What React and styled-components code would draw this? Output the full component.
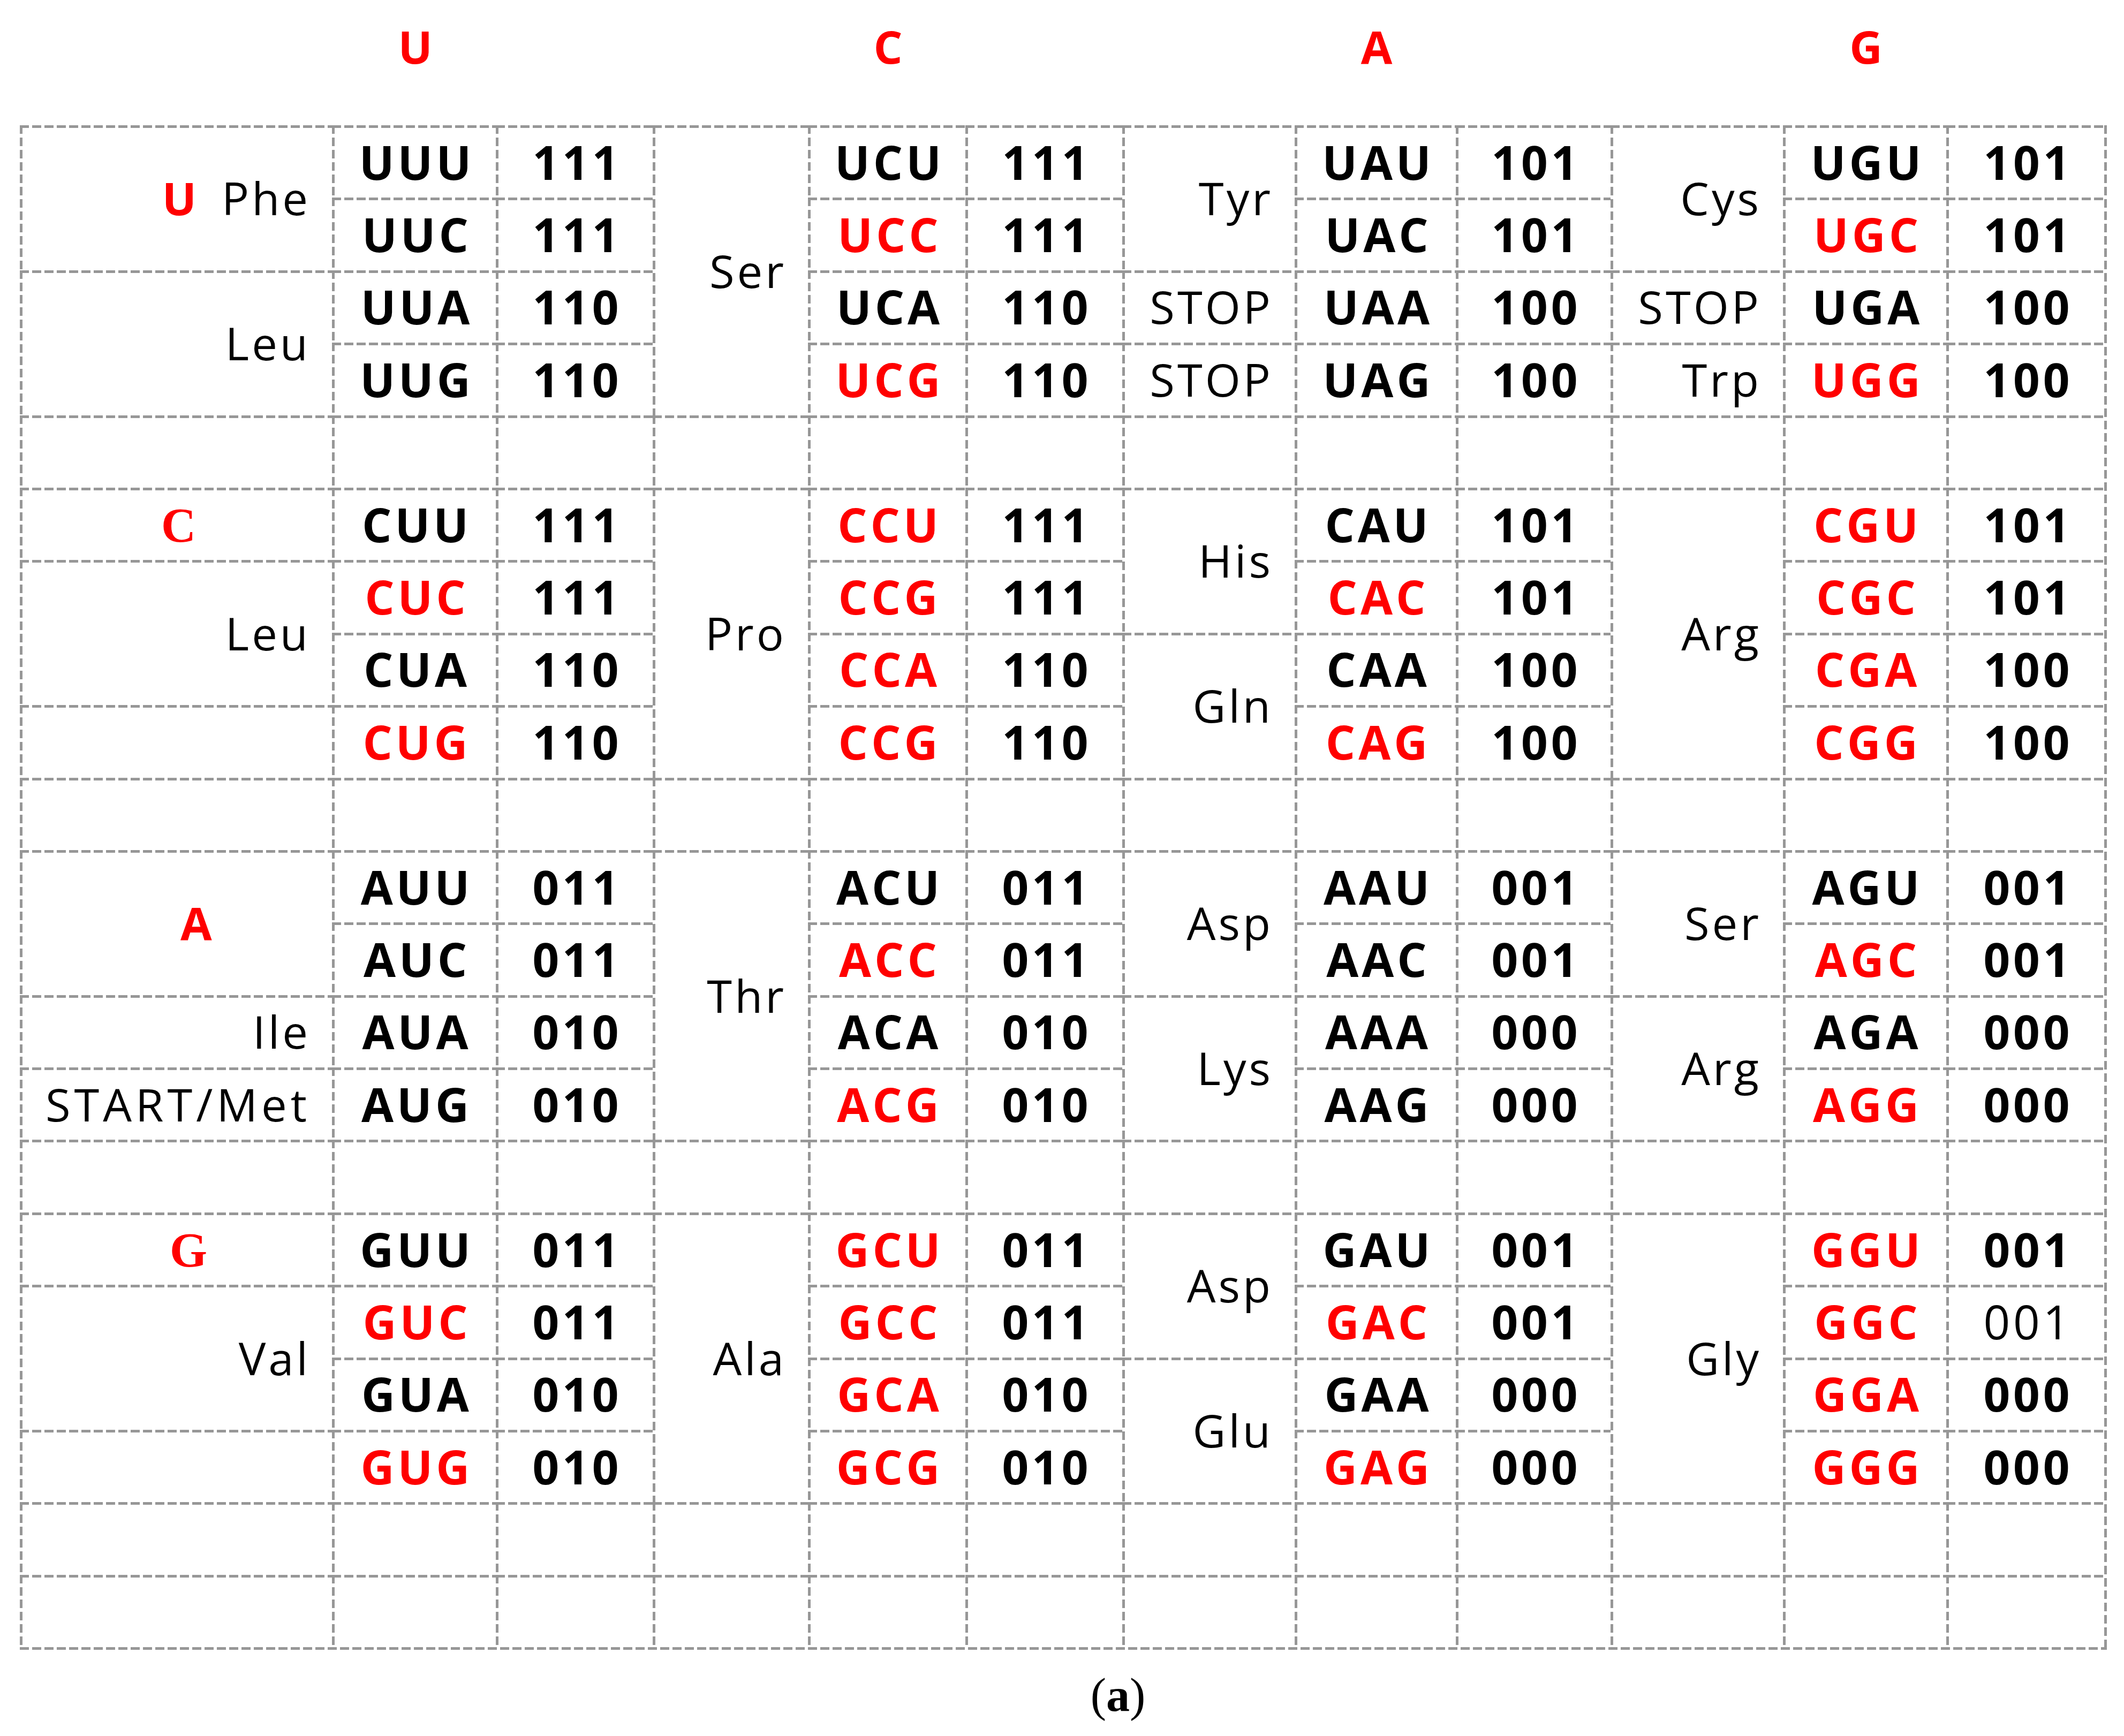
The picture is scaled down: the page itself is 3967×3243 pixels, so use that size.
import React from 'react'
import styled, { createGlobalStyle } from 'styled-components'

const GlobalStyle = createGlobalStyle`
  html, body {
    margin:0;
    padding:0;
    background:#ffffff;
  }
  body {
    width:3967px;
    height:3243px;
    overflow:hidden;
    font-family:"Open Sans", "Liberation Sans", sans-serif;
    color:#000000;
  }
`;

const LINE = '#979797';
const RED = '#ff0000';
const hDash = `repeating-linear-gradient(90deg, ${LINE} 0 17px, transparent 17px 23px)`;
const vDash = `repeating-linear-gradient(180deg, ${LINE} 0 16px, transparent 16px 23px)`;

// widths between line centres, left to right
const COLS = [583, 306, 293, 290, 294, 293, 322, 301, 289, 322, 305, 295];
const ROW_H = 135.4;

const Page = styled.div`
  width:3967px;
  height:3243px;
  display:flex;
  flex-direction:column;
`;

const Header = styled.div`
  display:grid;
  grid-template-columns:${COLS.map(w => w + 'px').join(' ')};
  height:234px;
  margin-left:37px;
`;

const HeadLetter = styled.div`
  grid-column:${p => p.$col + 1};
  padding:28px 0 0 5px;
  text-align:center;
  color:${RED};
  font-weight:700;
  font-size:85px;
  line-height:normal;
`;

const Frame = styled.div`
  margin-left:37px;
  width:max-content;
  padding:0 5px 5px 0;
  background:
    ${vDash} right top / 5px 100% no-repeat,
    ${hDash} left bottom / 100% 5px no-repeat;
`;

const Table = styled.table`
  border-collapse:separate;
  border-spacing:0;
  table-layout:fixed;
  width:${COLS.reduce((a, b) => a + b, 0)}px;
`;

const Row = styled.tr`
  height:${ROW_H}px;
`;

const Cell = styled.td`
  padding:5px 0 5px 5px;
  background:
    ${hDash} left top / 100% 5px no-repeat,
    ${vDash} left top / 5px 100% no-repeat;
  vertical-align:middle;
  white-space:nowrap;
  font-size:85px;
  line-height:normal;
`;

const CodonCell = styled(Cell)`
  padding-left:11px;
  text-align:center;
  font-size:87px;
  font-weight:700;
  letter-spacing:6px;
  color:${p => (p.$red ? RED : '#000000')};
`;

const BitsCell = styled(Cell)`
  padding-left:11px;
  text-align:center;
  font-size:87px;
  font-weight:${p => (p.$light ? 400 : 700)};
  letter-spacing:6px;
`;

const AminoCell = styled(Cell)`
  padding-right:40px;
  text-align:right;
  font-weight:400;
  letter-spacing:${p => (p.$wide ? 7 : 5)}px;
`;

const BaseCell = styled(Cell)`
  padding-left:${p => p.$pad}px;
  text-align:left;
`;

const Letter = styled.span`
  display:inline-block;
  color:${RED};
  font-weight:700;
  letter-spacing:0;
  font-family:${p => (p.$serif ? '"Liberation Serif", serif' : '"Open Sans", "Liberation Sans", sans-serif')};
  font-size:${p => (p.$serif ? 90 : 85)}px;
  margin-right:${p => p.$gap || 0}px;
`;

const Caption = styled.div`
  margin-top:34px;
  padding-left:209px;
  text-align:center;
  font-family:"Liberation Serif", "Times New Roman", serif;
  font-size:88px;
  line-height:normal;
`;

const CaptionMark = styled.span`
  font-weight:700;
`;

const blocks = [
  {
    base: [
      { span: 2, letter: 'U', name: 'Phe' },
      { span: 2, name: 'Leu' },
    ],
    groups: [
      { codons: ['UUU', 'UUC', 'UUA', 'UUG'], red: [], bits: ['111', '111', '110', '110'] },
      { amino: [{ span: 4, name: 'Ser' }], codons: ['UCU', 'UCC', 'UCA', 'UCG'], red: [1, 3], bits: ['111', '111', '110', '110'] },
      { amino: [{ span: 2, name: 'Tyr' }, { span: 1, name: 'STOP' }, { span: 1, name: 'STOP' }], codons: ['UAU', 'UAC', 'UAA', 'UAG'], red: [], bits: ['101', '101', '100', '100'] },
      { amino: [{ span: 2, name: 'Cys' }, { span: 1, name: 'STOP' }, { span: 1, name: 'Trp' }], codons: ['UGU', 'UGC', 'UGA', 'UGG'], red: [1, 3], bits: ['101', '101', '100', '100'] },
    ],
  },
  {
    base: [
      { span: 1, letter: 'C', serif: true, pad: 264 },
      { span: 2, name: 'Leu' },
      { span: 1, name: '' },
    ],
    groups: [
      { codons: ['CUU', 'CUC', 'CUA', 'CUG'], red: [1, 3], bits: ['111', '111', '110', '110'] },
      { amino: [{ span: 4, name: 'Pro' }], codons: ['CCU', 'CCG', 'CCA', 'CCG'], red: [0, 1, 2, 3], bits: ['111', '111', '110', '110'] },
      { amino: [{ span: 2, name: 'His' }, { span: 2, name: 'Gln' }], codons: ['CAU', 'CAC', 'CAA', 'CAG'], red: [1, 3], bits: ['101', '101', '100', '100'] },
      { amino: [{ span: 4, name: 'Arg' }], codons: ['CGU', 'CGC', 'CGA', 'CGG'], red: [0, 1, 2, 3], bits: ['101', '101', '100', '100'] },
    ],
  },
  {
    base: [
      { span: 2, letter: 'A', pad: 300 },
      { span: 1, name: 'Ile' },
      { span: 1, name: 'START/Met', wide: true },
    ],
    groups: [
      { codons: ['AUU', 'AUC', 'AUA', 'AUG'], red: [], bits: ['011', '011', '010', '010'] },
      { amino: [{ span: 4, name: 'Thr' }], codons: ['ACU', 'ACC', 'ACA', 'ACG'], red: [1, 3], bits: ['011', '011', '010', '010'] },
      { amino: [{ span: 2, name: 'Asp' }, { span: 2, name: 'Lys' }], codons: ['AAU', 'AAC', 'AAA', 'AAG'], red: [], bits: ['001', '001', '000', '000'] },
      { amino: [{ span: 2, name: 'Ser' }, { span: 2, name: 'Arg' }], codons: ['AGU', 'AGC', 'AGA', 'AGG'], red: [1, 3], bits: ['001', '001', '000', '000'] },
    ],
  },
  {
    base: [
      { span: 1, letter: 'G', serif: true, pad: 280 },
      { span: 2, name: 'Val' },
      { span: 1, name: '' },
    ],
    groups: [
      { codons: ['GUU', 'GUC', 'GUA', 'GUG'], red: [1, 3], bits: ['011', '011', '010', '010'] },
      { amino: [{ span: 4, name: 'Ala' }], codons: ['GCU', 'GCC', 'GCA', 'GCG'], red: [0, 1, 2, 3], bits: ['011', '011', '010', '010'] },
      { amino: [{ span: 2, name: 'Asp' }, { span: 2, name: 'Glu' }], codons: ['GAU', 'GAC', 'GAA', 'GAG'], red: [1, 3], bits: ['001', '001', '000', '000'] },
      { amino: [{ span: 4, name: 'Gly' }], codons: ['GGU', 'GGC', 'GGA', 'GGG'], red: [0, 1, 2, 3], bits: ['001', '001', '000', '000'], light: [1] },
    ],
  },
];

const segmentAt = (segs, r) => {
  let start = 0;
  for (const s of segs) {
    if (start === r) return s;
    start += s.span;
  }
  return null;
};

const BaseSegment = ({ seg }) => {
  if (seg.letter && seg.name) {
    return (
      <AminoCell rowSpan={seg.span}>
        <Letter $gap={47}>{seg.letter}</Letter>{seg.name}
      </AminoCell>
    );
  }
  if (seg.letter) {
    return (
      <BaseCell rowSpan={seg.span} $pad={seg.pad}>
        <Letter $serif={seg.serif}>{seg.letter}</Letter>
      </BaseCell>
    );
  }
  return <AminoCell rowSpan={seg.span} $wide={seg.wide}>{seg.name}</AminoCell>;
};

const BlockRows = ({ block }) =>
  [0, 1, 2, 3].map(r => {
    const base = segmentAt(block.base, r);
    return (
      <Row key={r}>
        {base && <BaseSegment seg={base} />}
        {block.groups.map((g, gi) => {
          const amino = g.amino ? segmentAt(g.amino, r) : null;
          return (
            <React.Fragment key={gi}>
              {amino && <AminoCell rowSpan={amino.span}>{amino.name}</AminoCell>}
              <CodonCell $red={g.red.includes(r)}>{g.codons[r]}</CodonCell>
              <BitsCell $light={g.light && g.light.includes(r)}>{g.bits[r]}</BitsCell>
            </React.Fragment>
          );
        })}
      </Row>
    );
  });

const BlankRow = () => (
  <Row>
    {COLS.map((_, i) => <Cell key={i} />)}
  </Row>
);

const App = () => (
  <Page>
    <GlobalStyle />
    <Header>
      <HeadLetter $col={1}>U</HeadLetter>
      <HeadLetter $col={4}>C</HeadLetter>
      <HeadLetter $col={7}>A</HeadLetter>
      <HeadLetter $col={10}>G</HeadLetter>
    </Header>
    <Frame>
      <Table>
        <colgroup>
          {COLS.map((w, i) => <col key={i} style={{ width: w }} />)}
        </colgroup>
        <tbody>
          {blocks.map((b, i) => (
            <React.Fragment key={i}>
              <BlockRows block={b} />
              <BlankRow />
            </React.Fragment>
          ))}
          <BlankRow />
        </tbody>
      </Table>
    </Frame>
    <Caption>(<CaptionMark>a</CaptionMark>)</Caption>
  </Page>
);

export default App;
